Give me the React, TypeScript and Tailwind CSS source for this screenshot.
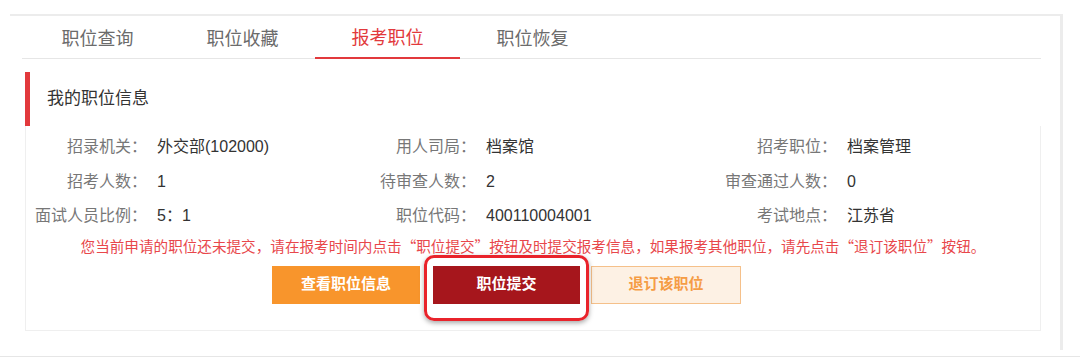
import React from "react";

const tabs = ["职位查询", "职位收藏", "报考职位", "职位恢复"];

const rows: [string, string, string, string, string, string][] = [
  ["招录机关：", "外交部(102000)", "用人司局：", "档案馆", "招考职位：", "档案管理"],
  ["招考人数：", "1", "待审查人数：", "2", "审查通过人数：", "0"],
  ["面试人员比例：", "5：1", "职位代码：", "400110004001", "考试地点：", "江苏省"],
];

export default function App() {
  return (
    <div
      className="w-[1080px] h-[358px] bg-white overflow-hidden relative"
      style={{ fontFamily: '"Liberation Sans", "Noto Sans CJK SC", sans-serif' }}
    >
      <div className="pt-[14px] pl-[10px]">
        <div className="w-[1053px] h-[336px] border-t-2 border-r-[3px] border-[#ececec]">
          <div className="pl-[12px] pr-[19px]">
            {/* Tabs */}
            <div className="flex h-[43px] border-b border-[#e6e6e6] pl-[3px]">
              {tabs.map((t, i) => (
                <div
                  key={t}
                  className={
                    i === 2
                      ? "w-[145px] flex items-center justify-center text-[18px] text-[#e2393c] border-b-2 border-[#e2393c] -mb-px pt-[4px]"
                      : "w-[145px] flex items-center justify-center text-[18px] text-[#6b6b6b] pt-[4px]"
                  }
                >
                  {t}
                </div>
              ))}
            </div>

            {/* Card */}
            <div className="mt-[13px] ml-[3px] w-[1016px]">
              <div className="h-[54px] flex items-center border-l-[5px] border-[#e2393c] pl-[17px] text-[17px] text-[#333]">
                我的职位信息
              </div>
              <div className="border-l border-b border-r border-[#efefef] pt-[4px] pb-[26px]">
                {rows.map((r, i) => (
                  <div
                    key={i}
                    className="grid grid-cols-[121px_213px_116px_241px_120px_1fr] h-[34.5px] items-center text-[16px]"
                  >
                    <div className="text-right text-[#777]">{r[0]}</div>
                    <div className="pl-[10px] text-[#333]">{r[1]}</div>
                    <div className="text-right text-[#777] whitespace-nowrap">{r[2]}</div>
                    <div className="pl-[10px] text-[#333]">{r[3]}</div>
                    <div className="text-right text-[#777] whitespace-nowrap">{r[4]}</div>
                    <div className="pl-[10px] text-[#333]">{r[5]}</div>
                  </div>
                ))}
                <div className="mt-[3px] h-[18px] leading-[18px] text-center text-[14.6px] text-[#e8474b] whitespace-nowrap font-['Noto_Sans_CJK_SC',sans-serif]">
                  您当前申请的职位还未提交，请在报考时间内点击“职位提交”按钮及时提交报考信息，如果报考其他职位，请先点击“退订该职位”按钮。
                </div>
                <div className="mt-[11px] flex pl-[246px] gap-[13px]">
                  <div className="w-[148px] h-[38px] flex items-center justify-center bg-[#f8952c] text-white text-[15px] font-bold">
                    查看职位信息
                  </div>
                  <div className="relative w-[147px] h-[38px] flex items-center justify-center bg-[#a6161c] text-white text-[15px] font-bold">
                    职位提交
                    <div className="absolute left-[-9px] right-[-9px] top-[-11px] bottom-[-17px] border-[3px] border-[#e9232b] rounded-[10px] shadow-[0_2px_5px_rgba(0,0,0,0.35)]" />
                  </div>
                  <div className="ml-[-2px] w-[150px] h-[38px] flex items-center justify-center bg-[#fdf1e4] border border-[#f5c08a] text-[#f59c45] text-[15px] font-bold">
                    退订该职位
                  </div>
                </div>
              </div>
            </div>
          </div>
        </div>
      </div>
      <div className="absolute left-0 right-0 top-[356px] h-px bg-[#e6e6e6]" />
    </div>
  );
}
